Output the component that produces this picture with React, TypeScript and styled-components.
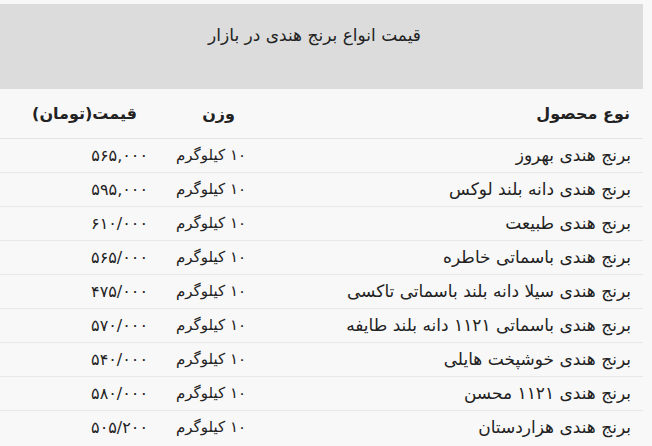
import React from 'react';
import styled, { createGlobalStyle } from 'styled-components';

const GlobalStyle = createGlobalStyle`
  html, body {
    margin: 0;
    padding: 0;
    background: #f8f8f8;
  }
  body {
    font-family: "DejaVu Sans", "Noto Sans", sans-serif;
    color: #222;
  }
`;

const Wrapper = styled.div`
  width: 643px;
  padding-top: 4px;
`;

const Table = styled.table`
  width: 100%;
  table-layout: fixed;
  border-collapse: collapse;
  direction: rtl;
`;

const Caption = styled.caption`
  height: 85px;
  box-sizing: border-box;
  padding: 21px 14px 0 0;
  background: #dcdcdc;
  text-align: center;
  font-size: 17px;
  color: #222;
`;

const Col = styled.col<{ $w?: number }>`
  width: ${(p) => (p.$w ? `${p.$w}px` : 'auto')};
`;

const HeadRow = styled.tr`
  height: 49px;
  border-bottom: 1px solid #e4e4e4;
`;

const Th = styled.th<{ $pad: number }>`
  text-align: right;
  font-weight: bold;
  font-size: 16px;
  padding: 0 ${(p) => p.$pad}px 0 0;
  white-space: nowrap;
`;

const Row = styled.tr`
  height: 34px;
  border-bottom: 1px solid #e8e8e8;
  &:last-child {
    border-bottom: none;
  }
`;

const Td = styled.td<{ $pad: number; $size: number }>`
  text-align: right;
  font-size: ${(p) => p.$size}px;
  padding: 0 ${(p) => p.$pad}px 0 0;
  white-space: nowrap;
`;

const rows: [string, string][] = [
  ['برنج هندی بهروز', '۵۶۵,۰۰۰'],
  ['برنج هندی دانه بلند لوکس', '۵۹۵,۰۰۰'],
  ['برنج هندی طبیعت', '۶۱۰/۰۰۰'],
  ['برنج هندی باسماتی خاطره', '۵۶۵/۰۰۰'],
  ['برنج هندی سیلا دانه بلند باسماتی تاکسی', '۴۷۵/۰۰۰'],
  ['برنج هندی باسماتی ۱۱۲۱ دانه بلند طایفه', '۵۷۰/۰۰۰'],
  ['برنج هندی خوشپخت هایلی', '۵۴۰/۰۰۰'],
  ['برنج هندی ۱۱۲۱ محسن', '۵۸۰/۰۰۰'],
  ['برنج هندی هزاردستان', '۵۰۵/۲۰۰'],
];

export default function App() {
  return (
    <>
      <GlobalStyle />
      <Wrapper>
        <Table>
          <Caption>قیمت انواع برنج هندی در بازار</Caption>
          <colgroup>
            <Col />
            <Col $w={98} />
            <Col $w={158} />
          </colgroup>
          <thead>
            <HeadRow>
              <Th $pad={13}>نوع محصول</Th>
              <Th $pad={21}>وزن</Th>
              <Th $pad={21}>قیمت(تومان)</Th>
            </HeadRow>
          </thead>
          <tbody>
            {rows.map(([name, price]) => (
              <Row key={name}>
                <Td $pad={12} $size={17}>{name}</Td>
                <Td $pad={10} $size={15}>۱۰ کیلوگرم</Td>
                <Td $pad={10} $size={16}>{price}</Td>
              </Row>
            ))}
          </tbody>
        </Table>
      </Wrapper>
    </>
  );
}
